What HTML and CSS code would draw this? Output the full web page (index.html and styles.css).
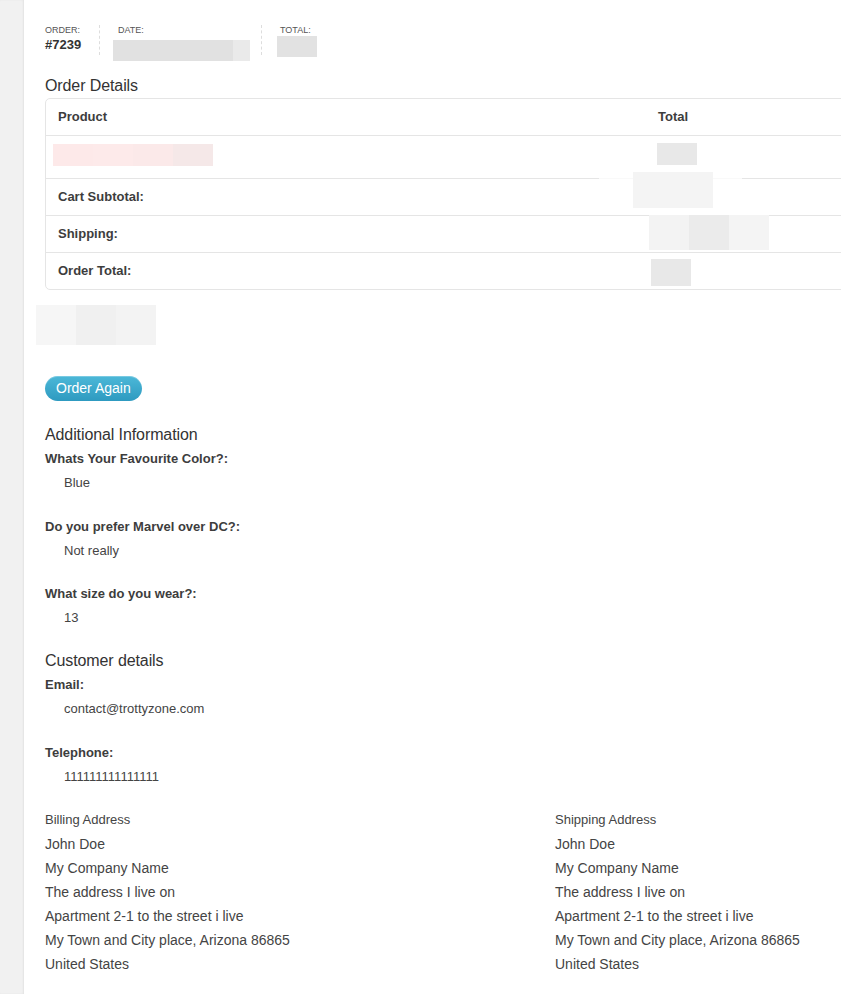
FILE: index.html
```html
<!DOCTYPE html>
<html lang="en">
<head>
  <meta charset="UTF-8">
  <meta name="viewport" content="width=device-width, initial-scale=1">
  <title>Order #7239</title>
  <link rel="stylesheet" href="styles.css">
</head>
<body>

  <div class="layout">
    <div class="sidebar"></div>

    <div class="main">
      <ul class="order-meta">
        <li class="meta-order">
          <span class="meta-label">Order:</span>
          <strong>#7239</strong>
        </li>
        <li class="meta-date">
          <span class="meta-label">Date:</span>
          <span class="blur blur-date"><i></i><i></i></span>
        </li>
        <li class="meta-total">
          <span class="meta-label">Total:</span>
          <span class="blur blur-total"></span>
        </li>
      </ul>

      <h2>Order Details</h2>
      <table class="order-table">
        <thead>
          <tr>
            <th class="col-product">Product</th>
            <th>Total</th>
          </tr>
        </thead>
        <tbody>
          <tr class="item-row">
            <td><span class="blur blur-product"><i></i><i></i><i></i><i></i></span></td>
            <td><span class="blur blur-line"></span></td>
          </tr>
        </tbody>
        <tfoot>
          <tr>
            <th>Cart Subtotal:</th>
            <td><span class="blur blur-subtotal"></span></td>
          </tr>
          <tr>
            <th>Shipping:</th>
            <td><span class="blur blur-shipping"><i></i><i></i><i></i></span></td>
          </tr>
          <tr>
            <th>Order Total:</th>
            <td><span class="blur blur-order-total"></span></td>
          </tr>
        </tfoot>
      </table>

      <div class="blur blur-note"><i></i><i></i><i></i></div>

      <a class="btn" href="#">Order Again</a>

      <h2>Additional Information</h2>
      <dl class="details">
        <dt>Whats Your Favourite Color?:</dt>
        <dd>Blue</dd>
        <dt>Do you prefer Marvel over DC?:</dt>
        <dd>Not really</dd>
        <dt>What size do you wear?:</dt>
        <dd>13</dd>
      </dl>

      <h2>Customer details</h2>
      <dl class="details">
        <dt>Email:</dt>
        <dd>contact@trottyzone.com</dd>
        <dt>Telephone:</dt>
        <dd>111111111111111</dd>
      </dl>

      <div class="addresses">
        <div class="address">
          <h3>Billing Address</h3>
          <address>
            John Doe<br>
            My Company Name<br>
            The address I live on<br>
            Apartment 2-1 to the street i live<br>
            My Town and City place, Arizona 86865<br>
            United States
          </address>
        </div>
        <div class="address">
          <h3>Shipping Address</h3>
          <address>
            John Doe<br>
            My Company Name<br>
            The address I live on<br>
            Apartment 2-1 to the street i live<br>
            My Town and City place, Arizona 86865<br>
            United States
          </address>
        </div>
      </div>
    </div>
  </div>

</body>
</html>
```

FILE: styles.css
```css
body {
  margin: 0;
  padding: 0;
  font-family: "Liberation Sans", Arial, sans-serif;
  background-color: #fff;
  color: #444;
}

.layout {
  display: flex;
  min-height: 994px;
}

.sidebar {
  width: 24px;
  flex-shrink: 0;
  background: #f1f1f1;
  box-shadow: inset -1px 0 2px rgba(0,0,0,0.06);
}

.main {
  flex: 1;
  overflow: hidden;
  padding: 22px 0 0 21px;
}

/* order summary strip */
.order-meta {
  display: flex;
  list-style: none;
  margin: 0;
  padding: 0;
  height: 52px;
}

.order-meta li {
  display: flex;
  flex-direction: column;
  border-right: 1px dashed #ddd;
  height: 30px;
  margin-top: 3px;
}

.order-meta li:last-child {
  border-right: none;
}

.meta-order {
  width: 54px;
}

.meta-date {
  width: 143px;
  padding-left: 18px;
}

.meta-total {
  padding-left: 18px;
}

.meta-label {
  font-size: 9px;
  text-transform: uppercase;
  color: #555;
  line-height: 12px;
  margin-top: -1px;
}

.order-meta strong {
  font-size: 13px;
  color: #333;
  line-height: 16px;
  margin-top: 1px;
}

/* blurred values */
.blur {
  display: block;
  flex-shrink: 0;
  background: #e4e4e4;
}

.blur i {
  display: block;
  flex: 1;
}

.blur-date {
  display: flex;
  width: 137px;
  height: 21px;
  margin: 4px 0 0 -5px;
  background: none;
}

.blur-date i:first-child {
  flex: 0 0 120px;
  background: #e1e1e1;
}

.blur-date i:last-child {
  background: #eaeaea;
}

.blur-total {
  width: 40px;
  height: 21px;
  margin: 0 0 0 -3px;
  background: #e2e2e2;
}

h2 {
  font-size: 16px;
  font-weight: normal;
  letter-spacing: -0.1px;
  color: #333;
  line-height: 24px;
  margin: 0;
}

/* order table */
.order-table {
  width: 1020px;
  border-collapse: separate;
  border-spacing: 0;
  border: 1px solid #e5e5e5;
  border-radius: 5px;
  font-size: 13px;
  color: #3d3d3d;
}

.order-table th,
.order-table td {
  text-align: left;
  padding: 11px 12px;
  line-height: 14px;
  border-top: 1px solid #e5e5e5;
  position: relative;
}

.order-table thead th {
  border-top: none;
}

.col-product {
  width: 576px;
}

.item-row td {
  padding-top: 8px;
  padding-bottom: 12px;
  height: 22px;
}

.blur-product {
  display: flex;
  width: 160px;
  height: 22px;
  margin-left: -5px;
  background: none;
}

.blur-product i:nth-child(1) { background: #fde9e9; }
.blur-product i:nth-child(2) { background: #fdeaea; }
.blur-product i:nth-child(3) { background: #fbe9e9; }
.blur-product i:nth-child(4) { background: #f5e8e8; }

.blur-line {
  width: 40px;
  height: 22px;
  margin: -2px 0 0 -1px;
  background: #e8e8e8;
}

.blur-subtotal {
  position: absolute;
  left: -13px;
  top: -7px;
  width: 80px;
  height: 36px;
  background: #f4f4f4;
  box-shadow: -40px 0 0 -6px rgba(255,255,255,0.75), 35px 0 0 -6px rgba(255,255,255,0.75);
}

.blur-shipping {
  position: absolute;
  left: 3px;
  top: -1px;
  display: flex;
  width: 120px;
  height: 35px;
  background: none;
  box-shadow: -30px 0 0 -4px rgba(255,255,255,0.75), 22px 0 0 -4px rgba(255,255,255,0.75);
}

.blur-shipping i:nth-child(1) { background: #f3f3f3; }
.blur-shipping i:nth-child(2) { background: #ebebeb; }
.blur-shipping i:nth-child(3) { background: #f4f4f4; }

.blur-order-total {
  position: absolute;
  left: 5px;
  top: 6px;
  width: 40px;
  height: 27px;
  background: #e8e8e8;
}

.blur-note {
  display: flex;
  width: 120px;
  height: 40px;
  margin: 15px 0 0 -9px;
  background: none;
}

.blur-note i:nth-child(1) { background: #f6f6f6; }
.blur-note i:nth-child(2) { background: #f0f0f0; }
.blur-note i:nth-child(3) { background: #f3f3f3; }

.btn {
  display: inline-block;
  margin: 31px 0 22px;
  padding: 5px 11px;
  line-height: 15px;
  font-size: 14px;
  color: #fff;
  text-decoration: none;
  border-radius: 13px;
  background: linear-gradient(#4cb8d8, #2e9ac0);
  box-shadow: inset 0 1px 0 rgba(255,255,255,0.25);
}

/* details lists */
.details {
  margin: 0;
}

.details dt {
  font-size: 13px;
  font-weight: bold;
  line-height: 24px;
  color: #3d3d3d;
}

.details dd {
  margin: 0 0 19.5px 19px;
  font-size: 13px;
  line-height: 24px;
  color: #444;
}

.details dd:last-child {
  margin-bottom: 19px;
}

.addresses {
  display: flex;
  width: 1020px;
}

.address {
  width: 510px;
}

.address h3 {
  font-size: 13px;
  font-weight: normal;
  line-height: 24px;
  margin: 0;
  color: #444;
}

.address address {
  font-style: normal;
  font-size: 14px;
  line-height: 24px;
  color: #444;
}
```
